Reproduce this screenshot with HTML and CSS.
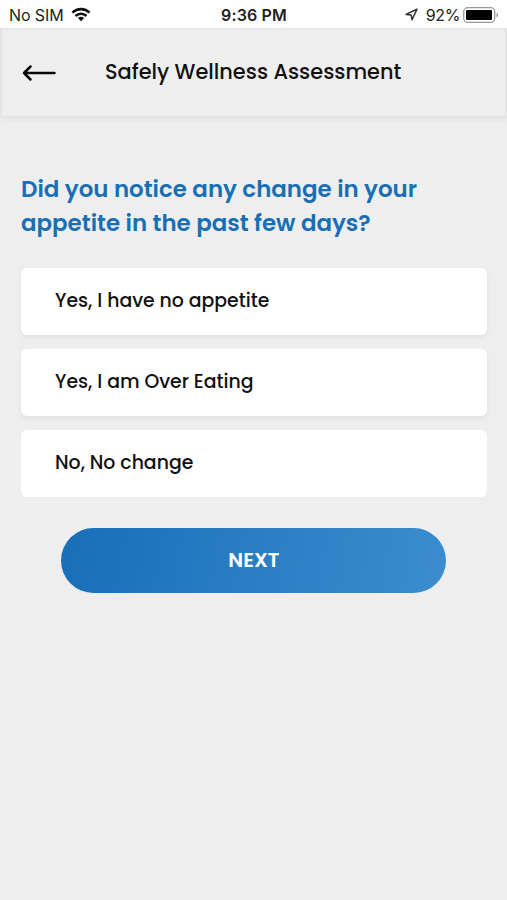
FILE: index.html
```html
<!DOCTYPE html>
<html lang="en">
<head>
<meta charset="utf-8">
<meta name="viewport" content="width=device-width, initial-scale=1">
<title>Safely Wellness Assessment</title>
<link rel="stylesheet" href="styles.css">
</head>
<body>
<div class="status">
  <div class="status-left">
    <span class="carrier">No SIM</span>
    <svg class="wifi" width="20" height="15" viewBox="0 0 20 15" fill="none" stroke="#111" stroke-width="2.6">
      <path d="M1.4 5.6a12.4 12.4 0 0 1 17.2 0M4.5 9a8 8 0 0 1 11 0"/>
      <path d="M10 14.2 6.9 11.1a4.5 4.5 0 0 1 6.2 0z" fill="#111" stroke="none"/>
    </svg>
  </div>
  <span class="time">9:36 PM</span>
  <div class="status-right">
    <svg class="location" width="13" height="13" viewBox="0 0 13 13" fill="none" stroke="#333" stroke-width="1.5" stroke-linejoin="round">
      <path d="M12 1.2 1 6.4l5.2.5.8 4.9z"/>
    </svg>
    <span class="percent">92%</span>
    <svg class="battery" width="36" height="16" viewBox="0 0 36 16">
      <rect x=".7" y=".7" width="31" height="14.6" rx="4" fill="#fff" stroke="#999" stroke-width="1.3"/>
      <rect x="3" y="3" width="26" height="10" rx="1" fill="#000"/>
      <path d="M33.5 5.5c2 .8 2 4.2 0 5z" fill="#999"/>
    </svg>
  </div>
</div>
<header class="header">
  <svg class="back" width="36" height="18" viewBox="0 0 36 18" fill="none" stroke="#080808" stroke-width="2.5" stroke-linecap="round" stroke-linejoin="round">
    <path d="M32.5 9H2M8.5 2.5 2 9l6.5 6.5"/>
  </svg>
  <h1 class="title">Safely Wellness Assessment</h1>
</header>
<main class="content">
  <h2 class="question">Did you notice any change in your<br>appetite in the past few days?</h2>
  <div class="options">
    <div class="option">Yes, I have no appetite</div>
    <div class="option">Yes, I am Over Eating</div>
    <div class="option option-last">No, No change</div>
  </div>
  <button class="next" type="button">NEXT</button>
</main>
</body>
</html>
```
FILE: styles.css
```css
* { box-sizing: border-box; }
body {
  margin: 0;
  min-height: 900px;
  background: #eee;
  color: #111;
  font-family: Poppins, Inter, sans-serif;
}
.status {
  display: grid;
  grid-template-columns: 1fr auto 1fr;
  align-items: center;
  height: 28px;
  padding: 1px 8px 0 9px;
  background: #fff;
  font: 400 16px/20px Inter, sans-serif;
  color: #222;
}
.status-left, .status-right { display: flex; align-items: center; }
.status-left { gap: 7px; }
.carrier { letter-spacing: -.1px; }
.status-right { justify-content: flex-end; }
.time { font-weight: 600; letter-spacing: .15px; }
.percent { margin: 0 3px 0 8px; letter-spacing: -.4px; }
.header {
  display: flex;
  align-items: center;
  height: 90px;
  padding: 0 22px 3px;
  border: 2px solid #e4e4e4;
  border-top-color: #e6e6e6;
  box-shadow: 0 2px 5px rgba(0, 0, 0, .04);
}
.back { flex: none; margin: 2px 0 0 -2px; }
.title {
  margin: 0 0 0 47px;
  font-size: 20.87px;
  font-weight: 500;
  line-height: 30px;
  white-space: nowrap;
}
.content { padding: 54px 20px 0 21px; }
.question {
  margin: 0;
  font-size: 22.93px;
  font-weight: 600;
  line-height: 34px;
  color: #186fb5;
  white-space: nowrap;
}
.options { display: grid; gap: 14px; margin-top: 28px; }
.option {
  display: flex;
  align-items: center;
  height: 67px;
  padding: 0 34px 2px;
  border-radius: 6px;
  background: #fff;
  box-shadow: 0 3px 5px rgba(0, 0, 0, .05);
  font-size: 18.87px;
  font-weight: 500;
}
.option-last { box-shadow: none; }
.next {
  display: block;
  width: 385px;
  height: 65px;
  margin: 31px 0 0 40.4px;
  padding: 0 0 2px;
  border: 0;
  border-radius: 33px;
  background: linear-gradient(100deg, #186fb8, #3b8dcf);
  color: #fff;
  font: inherit;
  font-size: 20.2px;
  font-weight: 600;
}
```
